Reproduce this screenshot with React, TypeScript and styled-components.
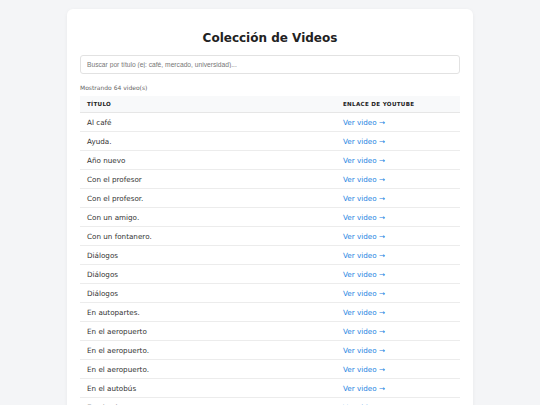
import React from 'react';
import styled, { createGlobalStyle } from 'styled-components';

const GlobalStyle = createGlobalStyle`
  html, body {
    margin: 0;
    padding: 0;
    background: #f4f5f7;
  }
  body {
    font-family: "DejaVu Sans", Verdana, sans-serif;
    color: #333;
  }
`;

const Page = styled.div`
  padding: 9px 0 0;
  display: flex;
  justify-content: center;
`;

const Card = styled.main`
  width: 380px;
  padding: 13px;
  background: #fff;
  border-radius: 6px;
  box-shadow: 0 1px 4px rgba(0, 0, 0, 0.05);
`;

const Title = styled.h1`
  margin: 9px 0 10px;
  font-size: 12px;
  line-height: 14px;
  font-weight: bold;
  text-align: center;
  color: #222;
`;

const Search = styled.input`
  display: block;
  box-sizing: border-box;
  width: 100%;
  height: 19px;
  padding: 0 6px;
  border: 1px solid #e2e2e2;
  border-radius: 3px;
  font-family: "Liberation Sans", Arial, sans-serif;
  font-size: 6.7px;
  color: #333;
  outline: none;
  &::placeholder {
    color: #777;
  }
`;

const Count = styled.p`
  margin: 10px 0 4px;
  font-size: 6px;
  line-height: 8px;
  color: #666;
`;

const Table = styled.table`
  width: 100%;
  border-collapse: collapse;
`;

const HeadCell = styled.th<{ $w?: string }>`
  width: ${(p) => p.$w || 'auto'};
  height: 16px;
  padding: 0 7px;
  background: #f8f9fa;
  border-bottom: 1px solid #e6e6e6;
  text-align: left;
  font-size: 5.6px;
  font-weight: bold;
  letter-spacing: 0.3px;
  text-transform: uppercase;
  color: #222;
`;

const Cell = styled.td`
  height: 18px;
  padding: 0 7px;
  border-bottom: 1px solid #ececec;
  font-size: 7.2px;
  color: #333;
`;

const Link = styled.a`
  color: #2383e2;
  text-decoration: none;
`;

const videos = [
  'Al café',
  'Ayuda.',
  'Año nuevo',
  'Con el profesor',
  'Con el profesor.',
  'Con un amigo.',
  'Con un fontanero.',
  'Diálogos',
  'Diálogos',
  'Diálogos',
  'En autopartes.',
  'En el aeropuerto',
  'En el aeropuerto.',
  'En el aeropuerto.',
  'En el autobús',
  'En el cajero',
];

export default function App() {
  return (
    <>
      <GlobalStyle />
      <Page>
        <Card>
          <Title>Colección de Videos</Title>
          <Search placeholder="Buscar por título (ej: café, mercado, universidad)..." />
          <Count>Mostrando 64 video(s)</Count>
          <Table>
            <thead>
              <tr>
                <HeadCell $w="242px">Título</HeadCell>
                <HeadCell>Enlace de YouTube</HeadCell>
              </tr>
            </thead>
            <tbody>
              {videos.map((t, i) => (
                <tr key={i}>
                  <Cell>{t}</Cell>
                  <Cell>
                    <Link href="#">Ver video →</Link>
                  </Cell>
                </tr>
              ))}
            </tbody>
          </Table>
        </Card>
      </Page>
    </>
  );
}
